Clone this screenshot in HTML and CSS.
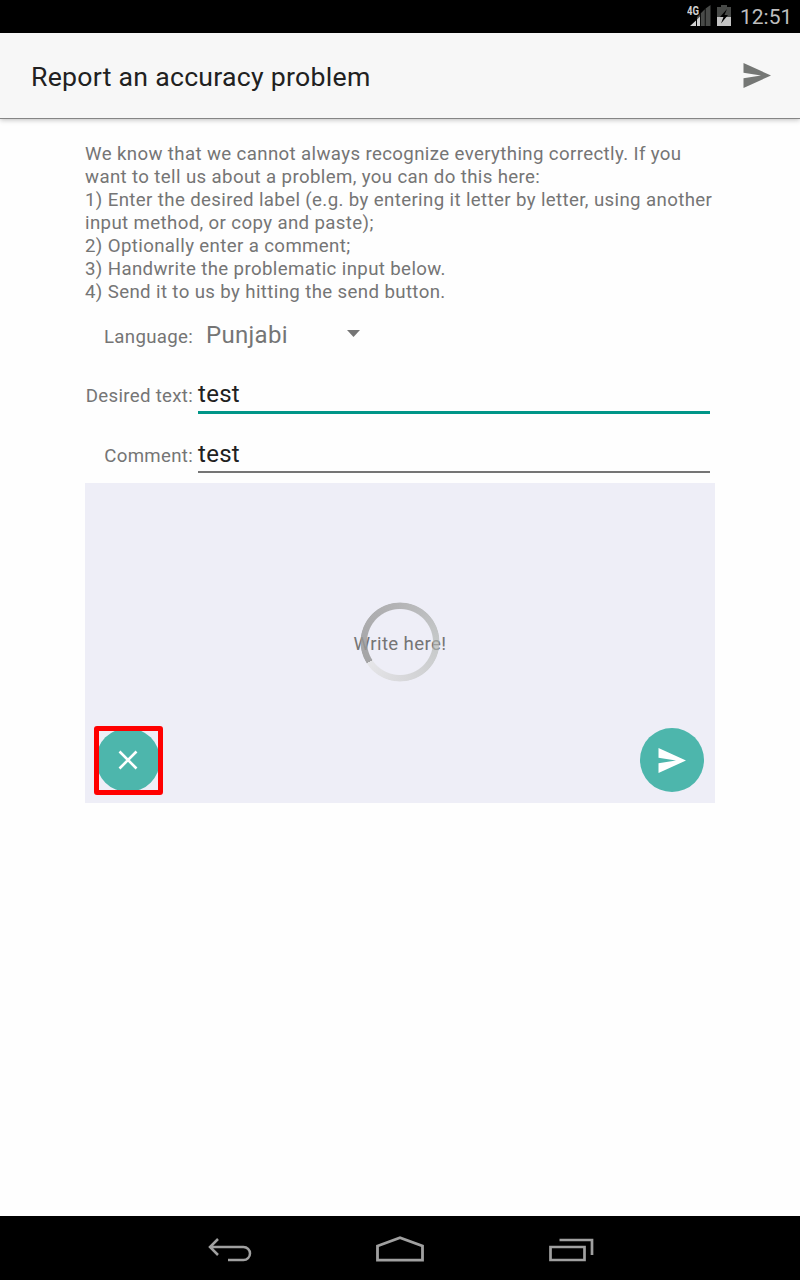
FILE: index.html
```html
<!DOCTYPE html>
<html lang="en">
<head>
<meta charset="utf-8">
<title>Report an accuracy problem</title>
<link rel="stylesheet" href="styles.css">
</head>
<body>
<div class="status">
  <svg class="signal" width="24" height="24" viewBox="0 0 24 24">
    <path d="M10 18.500V13L13 10V22H10zM13.800 9.200L17.800 5.200V22H13.800zM18.600 4.400L23.500 1V22H18.600z" fill="#484a48"/>
    <path d="M3 22L9 16.500V22zM10 15.500L13 12.500V22H10z" fill="#d0d0d0"/>
    <text class="net" x="0" y="11" textLength="12" lengthAdjust="spacingAndGlyphs">4G</text>
  </svg>
  <svg class="battery" width="14" height="21" viewBox="0 0 14 21">
    <path d="M4 0H10V2H14V21H0V2H4z" fill="#484a48"/>
    <path d="M0 12H14V21H0z" fill="#c4c4c4"/>
    <path d="M10 4L3 12H6.500L4 18.500L11 10H7.500z" fill="#000"/>
  </svg>
  <span class="clock">12:51</span>
</div>
<header class="bar">
  <h1 class="title">Report an accuracy problem</h1>
  <svg class="send" width="28" height="25" viewBox="0 0 28 25"><path d="M0.500 0L28 12.500L0.500 25V15.300L18 12.500L0.500 9.700z" fill="#757775"/></svg>
</header>
<main class="content">
  <p class="intro">We know that we cannot always recognize everything correctly. If you<br>want to tell us about a problem, you can do this here:<br>1) Enter the desired label (e.g. by entering it letter by letter, using another<br>input method, or copy and paste);<br>2) Optionally enter a comment;<br>3) Handwrite the problematic input below.<br>4) Send it to us by hitting the send button.</p>
  <div class="row language">
    <span class="label">Language:</span>
    <span class="select"><span class="value">Punjabi</span><svg width="13" height="7" viewBox="0 0 13 7"><path d="M0 0H13L6.500 7z" fill="#757575"/></svg></span>
  </div>
  <div class="row desired">
    <span class="label">Desired text:</span>
    <span class="field focused">test</span>
  </div>
  <div class="row comment">
    <span class="label">Comment:</span>
    <span class="field">test</span>
  </div>
  <section class="pad">
    <div class="hint"><span>Write here!</span><i class="spinner"></i></div>
    <div class="actions">
      <button class="round clear"><svg width="20" height="20" viewBox="0 0 20 20"><path d="M1.500 1.500L18.500 18.500M18.500 1.500L1.500 18.500" stroke="#fff" stroke-width="2.600"/></svg><i class="highlight"></i></button>
      <button class="round submit"><svg width="28" height="25" viewBox="0 0 28 25"><path d="M0.500 0L28 12.500L0.500 25V15.300L18 12.500L0.500 9.700z" fill="#fff"/></svg></button>
    </div>
  </section>
</main>
<nav class="nav">
  <svg width="44" height="24" viewBox="0 0 44 24"><path d="M1.500 9H35.500A6.500 6.500 0 0 1 35.500 22H20M10 1L2 9L10 17" fill="none" stroke="#a0a0a0" stroke-width="2.500"/></svg>
  <svg class="home" width="48" height="26" viewBox="0 0 48 26"><path d="M1.500 10L24 1.800L46.500 10V24.200H1.500z" fill="none" stroke="#a0a0a0" stroke-width="2.800"/></svg>
  <svg class="recent" width="45" height="24" viewBox="0 0 45 24"><path d="M1.500 9H35.500V22H1.500zM10.500 2H43V17" fill="none" stroke="#a0a0a0" stroke-width="2.700"/></svg>
</nav>
</body>
</html>
```
FILE: styles.css
```css
* { box-sizing: border-box; }
body {
  margin: 0;
  width: 800px;
  height: 1280px;
  display: flex;
  flex-direction: column;
  background: #fefefe;
  font-family: Roboto, sans-serif;
  color: #757575;
  overflow: hidden;
}
svg { display: block; flex: none; }
.status {
  height: 33px;
  flex: none;
  background: #000;
  display: flex;
  align-items: flex-start;
  justify-content: flex-end;
  padding-right: 9px;
}
.signal { margin-top: 4px; margin-right: 6px; }
.net { font: 700 12px Roboto, sans-serif; fill: #d0d0d0; }
.battery { margin-top: 5px; margin-right: 9px; }
.clock { font-size: 21px; line-height: 35px; width: 51px; color: #bebebe; white-space: nowrap; }
.bar {
  height: 86px;
  flex: none;
  background: #f7f7f7;
  border-bottom: 1px solid #858585;
  box-shadow: 0 1px 5px rgba(0, 0, 0, .25);
  display: flex;
  justify-content: space-between;
  padding: 0 29px 0 31px;
}
.title { margin: 0; font-size: 26.67px; font-weight: 400; line-height: 88px; letter-spacing: .26px; color: #212121; }
.send { margin-top: 30px; }
.content { flex: 1; padding: 24px 85px 0; }
.intro {
  margin: 0;
  height: 160px;
  font-size: 18.67px;
  line-height: 23px;
  letter-spacing: .37px;
  white-space: nowrap;
}
.row { display: flex; height: 60px; }
.label {
  width: 113px;
  padding-right: 5px;
  padding-top: 1px;
  text-align: right;
  font-size: 18.67px;
  line-height: 24px;
  letter-spacing: .3px;
  white-space: nowrap;
}
.language { height: 70px; padding-top: 21px; }
.select { display: flex; font-size: 24px; line-height: 24px; padding-left: 8px; letter-spacing: .3px; }
.value { width: 141px; margin-top: -1px; }
.select svg { margin-top: 6px; }
.desired { padding-top: 10px; }
.comment { padding-top: 10px; height: 50px; }
.field {
  width: 512px;
  height: 30px;
  font-size: 24px;
  line-height: 22px;
  letter-spacing: .3px;
  color: #212121;
  border-bottom: 2px solid #757575;
}
.focused { height: 31px; border-bottom: 3px solid #009688; }
.pad {
  height: 320px;
  background: #eeeef7;
  display: flex;
  flex-direction: column;
  justify-content: space-between;
}
.hint {
  position: relative;
  margin-top: 119px;
  height: 80px;
  display: flex;
  justify-content: center;
  font-size: 18.67px;
  line-height: 84px;
  letter-spacing: .36px;
}
.spinner {
  position: absolute;
  left: 275px;
  top: 0;
  width: 80px;
  height: 80px;
  border-radius: 50%;
  background: conic-gradient(from 237deg, rgba(150,150,150,.85), rgba(160,160,160,.75) 120deg, rgba(175,179,175,.65) 210deg, rgba(205,205,205,.65) 300deg, rgba(225,225,225,.65));
  -webkit-mask: radial-gradient(circle, transparent 32.5px, #000 33.5px, #000 39px, transparent 40px);
  mask: radial-gradient(circle, transparent 32.5px, #000 33.5px, #000 39px, transparent 40px);
}
.actions { display: flex; justify-content: space-between; padding: 0 11px 11px; }
.round {
  position: relative;
  width: 64px;
  height: 64px;
  border: 0;
  padding: 0;
  border-radius: 50%;
  background: #4db6ac;
  display: flex;
  align-items: center;
  justify-content: center;
}
.highlight {
  position: absolute;
  left: -2px;
  top: -2px;
  width: 69px;
  height: 69px;
  border: 5px solid #f00;
  border-radius: 3px;
}
.nav {
  height: 64px;
  flex: none;
  background: #000;
  display: flex;
  align-items: flex-start;
  padding: 21px 0 0 208px;
}
.nav svg { margin-top: 1px; }
.nav .home { margin-left: 124px; margin-top: -1px; }
.nav .recent { margin-left: 125px; }
```
